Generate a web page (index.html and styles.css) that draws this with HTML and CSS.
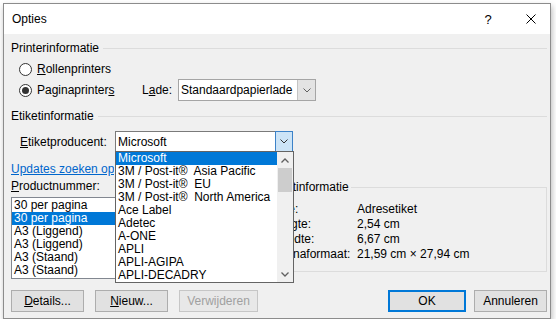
FILE: index.html
```html
<!DOCTYPE html>
<html>
<head>
<title>Opties</title>
<link rel="stylesheet" href="styles.css">
</head>
<body>
<div class="dialog">
    <div class="titlebar">
        <span class="title">Opties</span>
        <span class="help">?</span>
        <span class="close">
            <svg width="10" height="10" viewBox="0 0 10 10"><path d="M0.5 0.5 L9.5 9.5 M9.5 0.5 L0.5 9.5" stroke="#000" stroke-width="1"/></svg>
        </span>
    </div>
    <div class="content">
        <div class="group-header"><span>Printerinformatie</span><span class="group-line"></span></div>

        <div class="radio-row first">
            <span class="radio"></span>
            <span class="radio-label"><u>R</u>ollenprinters</span>
        </div>
        <div class="radio-row">
            <span class="radio checked"></span>
            <span class="radio-label wide">Paginaprinter<u>s</u></span>
            <span class="field-label lade">L<u>a</u>de:</span>
            <div class="select">
                <span class="select-text">Standaardpapierlade</span>
                <span class="select-arrow">
                    <svg width="8" height="5" viewBox="0 0 8 5"><polyline points="0.5,0.5 4,4 7.5,0.5" fill="none" stroke="#606060"/></svg>
                </span>
            </div>
        </div>

        <div class="group-header second"><span>Etiketinformatie</span><span class="group-line"></span></div>

        <div class="producer-row">
            <span class="field-label producer"><u>E</u>tiketproducent:</span>
            <div class="combo">
                <span class="select-text">Microsoft</span>
                <span class="combo-arrow">
                    <svg width="8" height="5" viewBox="0 0 8 5"><polyline points="0.5,0.5 4,4 7.5,0.5" fill="none" stroke="#333"/></svg>
                </span>
                <div class="dropdown">
                    <div class="dropdown-items">
                        <div class="item selected">Microsoft</div>
                        <div class="item">3M / Post-it®&nbsp; Asia Pacific</div>
                        <div class="item">3M / Post-it®&nbsp; EU</div>
                        <div class="item">3M / Post-it®&nbsp; North America</div>
                        <div class="item">Ace Label</div>
                        <div class="item">Adetec</div>
                        <div class="item">A-ONE</div>
                        <div class="item">APLI</div>
                        <div class="item">APLI-AGIPA</div>
                        <div class="item">APLI-DECADRY</div>
                    </div>
                    <div class="scrollbar">
                        <span class="scroll-btn">
                            <svg width="8" height="5" viewBox="0 0 8 5"><polyline points="0.5,4.5 4,1 7.5,4.5" fill="none" stroke="#606060" stroke-width="1.3"/></svg>
                        </span>
                        <span class="scroll-thumb"></span>
                        <span class="scroll-track"></span>
                        <span class="scroll-btn">
                            <svg width="8" height="5" viewBox="0 0 8 5"><polyline points="0.5,0.5 4,4 7.5,0.5" fill="none" stroke="#606060" stroke-width="1.3"/></svg>
                        </span>
                    </div>
                </div>
            </div>
        </div>

        <div class="link-row"><a class="link" href="#">Updates zoeken op Office.com</a></div>

        <div class="bottom">
            <div class="product-col">
                <div class="field-label"><u>P</u>roductnummer:</div>
                <div class="listbox">
                    <div class="item">30 per pagina</div>
                    <div class="item selected">30 per pagina</div>
                    <div class="item">A3 (Liggend)</div>
                    <div class="item">A3 (Liggend)</div>
                    <div class="item">A3 (Staand)</div>
                    <div class="item">A3 (Staand)</div>
                </div>
            </div>
            <fieldset class="info">
                <legend>Etiketinformatie</legend>
                <div class="info-row"><span class="info-label">Type:</span><span>Adresetiket</span></div>
                <div class="info-row"><span class="info-label">Hoogte:</span><span>2,54 cm</span></div>
                <div class="info-row"><span class="info-label">Breedte:</span><span>6,67 cm</span></div>
                <div class="info-row"><span class="info-label">Paginaformaat:</span><span>21,59 cm × 27,94 cm</span></div>
            </fieldset>
        </div>

        <div class="buttons">
            <button class="btn details"><u>D</u>etails...</button>
            <button class="btn new"><u>N</u>ieuw...</button>
            <button class="btn remove" disabled>Verwijderen</button>
            <span class="spacer"></span>
            <button class="btn ok">OK</button>
            <button class="btn cancel">Annuleren</button>
        </div>
    </div>
</div>
</body>
</html>
```
FILE: styles.css
```css
body {
    margin: 0;
    background: #ffffff;
    font-family: "Liberation Sans", Arial, sans-serif;
    font-size: 12px;
    color: #000;
}

.dialog {
    margin: 3px 0 0 3px;
    width: 546px;
    border: 1px solid #8c8c8c;
    box-shadow: 1px 3px 6px rgba(0, 0, 0, 0.28);
    background: #f0f0f0;
}

.titlebar {
    height: 30px;
    background: #ffffff;
    display: flex;
    align-items: center;
}

.title {
    flex: 1;
    padding-left: 8px;
    font-size: 12px;
}

.help {
    width: 20px;
    text-align: center;
    margin-right: 23px;
    font-size: 13px;
}

.close {
    width: 20px;
    margin-right: 9px;
    display: flex;
    justify-content: center;
}

.content {
    padding: 7px 3px 6px 7px;
}

.group-header {
    display: flex;
    align-items: center;
    height: 14px;
    line-height: 14px;
}

.group-header.second {
    margin-top: 8px;
}

.group-line {
    flex: 1;
    border-top: 1px solid #dcdcdc;
    margin-left: 4px;
}

.radio-row {
    display: flex;
    align-items: center;
    height: 22px;
    padding-left: 8px;
}

.radio-row.first {
    height: 20px;
    margin-top: 4px;
}

.radio {
    width: 11px;
    height: 11px;
    border: 1px solid #333;
    border-radius: 50%;
    background: #fff;
    position: relative;
    flex-shrink: 0;
}

.radio.checked::after {
    content: "";
    position: absolute;
    left: 2px;
    top: 2px;
    width: 7px;
    height: 7px;
    border-radius: 50%;
    background: #333;
}

.radio-label {
    margin-left: 5px;
}

.radio-label.wide {
    width: 105px;
}

.field-label.lade {
    width: 36px;
}

.select {
    width: 136px;
    height: 20px;
    border: 1px solid #a5a5a5;
    background: #fff;
    display: flex;
    align-items: center;
}

.select-text {
    flex: 1;
    padding-left: 2px;
}

.select-arrow {
    width: 17px;
    height: 20px;
    background: #e3e3e3;
    border-left: 1px solid #c4c4c4;
    display: flex;
    align-items: center;
    justify-content: center;
}

.producer-row {
    display: flex;
    align-items: center;
    margin-top: 8px;
    padding-left: 9px;
}

.field-label.producer {
    width: 95px;
}

.combo {
    position: relative;
    width: 177px;
    height: 19px;
    border: 1px solid #7a7a7a;
    border-right: none;
    background: #fff;
    display: flex;
    align-items: center;
}

.combo-arrow {
    width: 16px;
    height: 19px;
    margin-top: -2px;
    margin-bottom: -2px;
    background: #cce4f7;
    border: 1px solid #3c82c8;
    display: flex;
    align-items: center;
    justify-content: center;
}

.dropdown {
    position: absolute;
    left: -1px;
    top: 19px;
    width: 177px;
    border: 1px solid #646464;
    background: #fff;
    display: flex;
    z-index: 2;
}

.dropdown-items {
    flex: 1;
}

.item {
    height: 13px;
    line-height: 13px;
    padding-left: 2px;
    white-space: nowrap;
}

.item.selected {
    background: #0078d7;
    color: #fff;
}

.scrollbar {
    width: 16px;
    background: #f0f0f0;
    display: flex;
    flex-direction: column;
}

.scroll-btn {
    height: 16px;
    display: flex;
    align-items: center;
    justify-content: center;
}

.scroll-thumb {
    height: 24px;
    margin: 0 1px;
    background: #cdcdcd;
}

.scroll-track {
    flex: 1;
}

/* the rest of the link lies under the open dropdown */
.link-row {
    margin-top: 11px;
    width: 103px;
    height: 13px;
    line-height: 13px;
    overflow: hidden;
    white-space: nowrap;
}

.link {
    color: #0066cc;
}

.bottom {
    display: flex;
    margin-top: 4px;
}

.product-col {
    width: 239px;
}

.product-col .field-label {
    height: 13px;
    line-height: 13px;
}

.listbox {
    margin-top: 4px;
    height: 79px;
    padding-top: 1px;
    border: 1px solid #828790;
    background: #fff;
}

.listbox .item {
    padding-left: 2px;
}

.info {
    margin: 0 0 0 8px;
    flex: 1;
    height: 82px;
    border: 1px solid #dcdcdc;
    padding: 8px 0 0 10px;
}

.info legend {
    padding: 0 2px;
    margin-left: -5px;
    line-height: 14px;
}

.info-row {
    display: flex;
    height: 15px;
    line-height: 15px;
}

.info-label {
    width: 88px;
}

.buttons {
    display: flex;
    margin-top: 11px;
}

.btn {
    height: 22px;
    margin: 0;
    padding: 0;
    border: 1px solid #adadad;
    background: #e1e1e1;
    font-family: "Liberation Sans", Arial, sans-serif;
    font-size: 12px;
    color: #000;
}

.details {
    width: 73px;
}

.new {
    width: 73px;
    margin-left: 11px;
}

.remove {
    width: 79px;
    margin-left: 11px;
    color: #a0a0a0;
    border-color: #c6c6c6;
    background: #e8e8e8;
}

.spacer {
    flex: 1;
}

.ok {
    width: 78px;
    border: 2px solid #0078d7;
}

.cancel {
    width: 73px;
    margin-left: 8px;
}
```
